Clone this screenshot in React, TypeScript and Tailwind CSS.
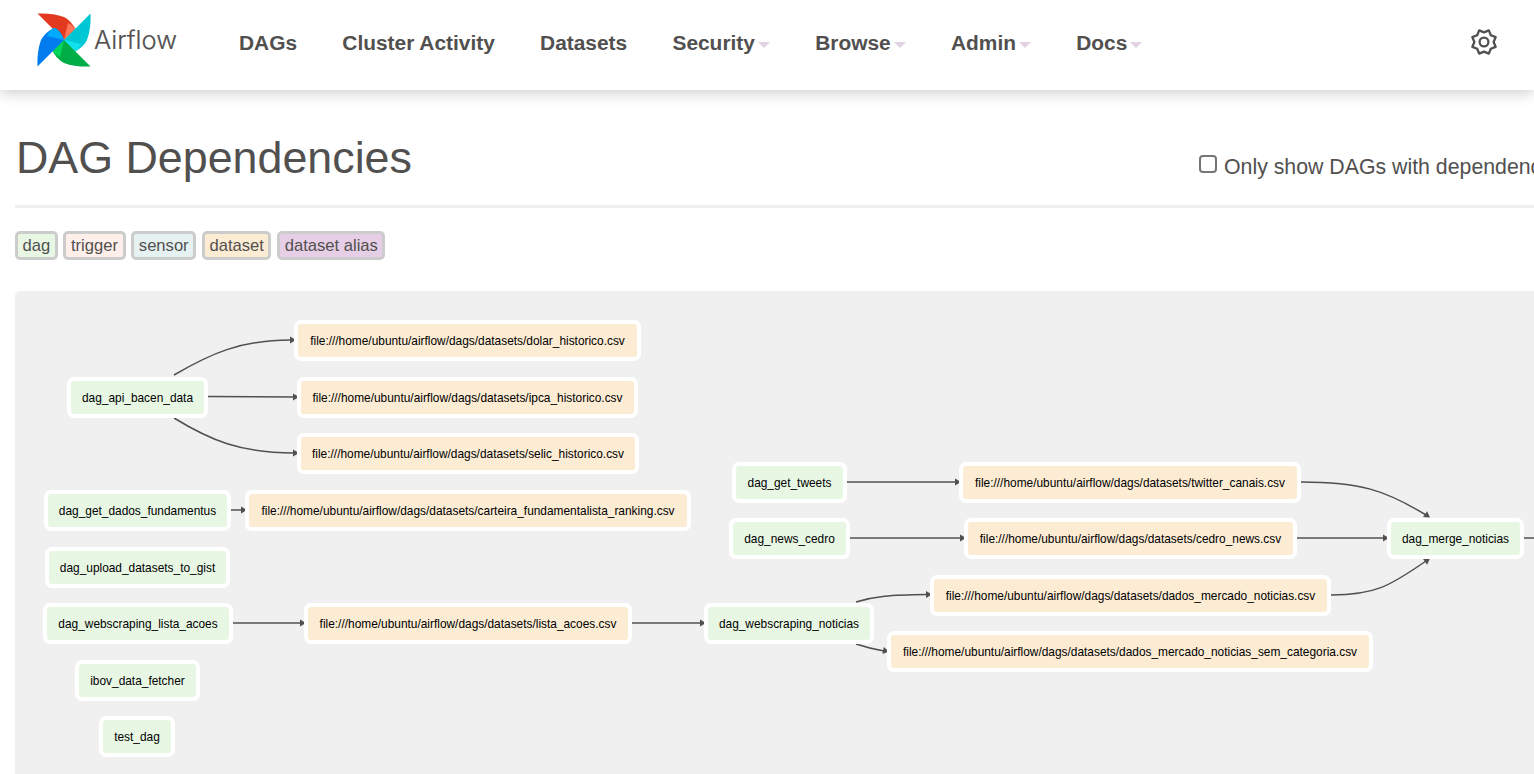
import React from "react";

type N = { t: string; x0: number; x1: number; cy: number; k: "dag" | "ds" };
const nodes: N[] = [
  { t: "file:///home/ubuntu/airflow/dags/datasets/dolar_historico.csv", x0: 295, x1: 640, cy: 340, k: "ds" },
  { t: "file:///home/ubuntu/airflow/dags/datasets/ipca_historico.csv", x0: 298, x1: 637, cy: 397, k: "ds" },
  { t: "file:///home/ubuntu/airflow/dags/datasets/selic_historico.csv", x0: 298, x1: 638, cy: 453, k: "ds" },
  { t: "dag_api_bacen_data", x0: 68, x1: 207, cy: 397, k: "dag" },
  { t: "dag_get_dados_fundamentus", x0: 45, x1: 230, cy: 510, k: "dag" },
  { t: "file:///home/ubuntu/airflow/dags/datasets/carteira_fundamentalista_ranking.csv", x0: 246, x1: 690, cy: 510, k: "ds" },
  { t: "dag_upload_datasets_to_gist", x0: 46, x1: 229, cy: 567, k: "dag" },
  { t: "dag_webscraping_lista_acoes", x0: 44, x1: 232, cy: 623, k: "dag" },
  { t: "file:///home/ubuntu/airflow/dags/datasets/lista_acoes.csv", x0: 305, x1: 631, cy: 623, k: "ds" },
  { t: "dag_webscraping_noticias", x0: 705, x1: 873, cy: 623, k: "dag" },
  { t: "ibov_data_fetcher", x0: 76, x1: 199, cy: 680, k: "dag" },
  { t: "test_dag", x0: 100, x1: 174, cy: 736, k: "dag" },
  { t: "dag_get_tweets", x0: 733, x1: 846, cy: 482, k: "dag" },
  { t: "file:///home/ubuntu/airflow/dags/datasets/twitter_canais.csv", x0: 960, x1: 1300, cy: 482, k: "ds" },
  { t: "dag_news_cedro", x0: 730, x1: 849, cy: 538, k: "dag" },
  { t: "file:///home/ubuntu/airflow/dags/datasets/cedro_news.csv", x0: 965, x1: 1296, cy: 538, k: "ds" },
  { t: "dag_merge_noticias", x0: 1388, x1: 1523, cy: 538, k: "dag" },
  { t: "file:///home/ubuntu/airflow/dags/datasets/dados_mercado_noticias.csv", x0: 931, x1: 1330, cy: 595, k: "ds" },
  { t: "file:///home/ubuntu/airflow/dags/datasets/dados_mercado_noticias_sem_categoria.csv", x0: 888, x1: 1372, cy: 651, k: "ds" },
];

const CANVAS_X = 15;
const CANVAS_Y = 291;

const edges: { d: string; a: [number, number, number] }[] = [
  { d: "M174 375 C210 354 240 340 291 340", a: [296, 340, 0] },
  { d: "M207 396.500 L294 397", a: [299, 397, 0] },
  { d: "M174 418 C210 440 240 453 294 453", a: [299, 453, 0] },
  { d: "M230 510 L242 510", a: [247, 510, 0] },
  { d: "M232 623 L301 623", a: [306, 623, 0] },
  { d: "M631 623 L701 623", a: [706, 623, 0] },
  { d: "M856 602 C875 596 890 595 927 594.500", a: [932, 594.500, 0] },
  { d: "M856 644 C865 647 872 649 884 651", a: [889, 651.500, 10] },
  { d: "M846 482 L956 482", a: [961, 482, 0] },
  { d: "M849 538 L961 538", a: [966, 538, 0] },
  { d: "M1301 482 C1360 482 1385 490 1426 515", a: [1430, 517.500, 35] },
  { d: "M1296 538 L1384 538", a: [1389, 538, 0] },
  { d: "M1331 595 C1375 595 1390 586 1426 561", a: [1430, 558.500, -35] },
  { d: "M1523 538 L1534 538", a: [1540, 538, 0] },
];

function Logo() {
  const blade = (main: string, light: string, rot: number) => (
    <g transform={`rotate(${rot})`} key={rot}>
      <path d="M0 0 L-26.500 -26.500 C-18 -27 -8 -26 0 -23 C6 -20 10 -14 12 -10 C12 -6 6 -2 0 0 Z" fill={main} />
      <path d="M0 0 L4 -17 C8 -15 10.500 -13 12 -10 C11 -6 6 -2 0 0 Z" fill={light} />
    </g>
  );
  return (
    <svg width="56" height="56" viewBox="-28 -28 56 56" className="shrink-0">
      {blade("#e43921", "#ff7557", 0)}
      {blade("#00c7d4", "#11e1ee", 90)}
      {blade("#00ad46", "#04d659", 180)}
      {blade("#017cee", "#00acff", 270)}
    </svg>
  );
}

function gearPath() {
  const pts: string[] = [];
  for (let k = 0; k < 16; k++) {
    const r = k % 2 === 0 ? 12.6 : 9.6;
    const ang = ((k * 22.5 + 22.5) * Math.PI) / 180;
    pts.push(`${(14 + r * Math.sin(ang)).toFixed(2)} ${(14 - r * Math.cos(ang)).toFixed(2)}`);
  }
  return `M${pts.join(" L")} Z`;
}

function Caret() {
  return <span className="mt-[5px] ml-[3px] h-0 w-0 border-x-[6px] border-t-[6px] border-x-transparent border-t-[#e2d2e2]" />;
}

function NavItem({ label, caret }: { label: string; caret?: boolean }) {
  return (
    <a className="flex items-center text-[20.900px] font-bold whitespace-nowrap text-[#51504f]">
      {label}
      {caret && <Caret />}
    </a>
  );
}

function Badge({ label, bg }: { label: string; bg: string }) {
  return <span className={`rounded-[5px] border-[3px] border-[#cccccc] px-[4.500px] text-[16.600px] leading-[23px] text-[#51504f] ${bg}`}>{label}</span>;
}

export default function App() {
  return (
    <div className="h-[774px] w-[1534px] overflow-hidden bg-white font-['Liberation_Sans',Arial,sans-serif] text-[#51504f]">
      <header className="flex h-[90px] items-center bg-white px-[36px] shadow-[0_2px_14px_rgba(0,0,0,0.22)]">
        <div className="mb-[10px] flex items-center">
          <Logo />
          <span className="ml-[2px] font-['Inter',sans-serif] text-[25.500px] leading-[28px] font-light text-[#51504f] [-webkit-text-stroke:0.2px_#51504f]">Airflow</span>
        </div>
        <nav className="mb-[4px] ml-[62px] flex items-center gap-[45.300px]">
          <NavItem label="DAGs" />
          <NavItem label="Cluster Activity" />
          <NavItem label="Datasets" />
          <NavItem label="Security" caret />
          <NavItem label="Browse" caret />
          <NavItem label="Admin" caret />
          <NavItem label="Docs" caret />
        </nav>
        <svg className="mb-[6px] ml-auto" width="28" height="28" viewBox="0 0 28 28" fill="none" stroke="#51504f" strokeWidth="2.300" strokeLinejoin="round">
          <path d={gearPath()} />
          <circle cx="14" cy="14" r="4.400" />
        </svg>
      </header>

      <main className="w-[1800px] pl-[15px]">
        <div className="flex h-[118px] items-start border-b-[3px] border-[#eeeeee] pt-[40px]">
          <h1 className="w-[1184px] pl-px text-[44.800px] leading-[55px] font-normal whitespace-nowrap text-[#51504f]">DAG Dependencies</h1>
          <label className="mt-[23px] flex items-start text-[21.300px] leading-[29px] whitespace-nowrap text-[#51504f]">
            <span className="mt-[2px] mr-[7px] h-[18px] w-[18px] rounded-[4px] border-2 border-[#767676] bg-white" />
            Only show DAGs with dependencies
          </label>
        </div>
        <div className="mt-[23px] flex gap-[5.800px]">
          <Badge label="dag" bg="bg-[#e8f7e4]" />
          <Badge label="trigger" bg="bg-[#ffefeb]" />
          <Badge label="sensor" bg="bg-[#e6f1f2]" />
          <Badge label="dataset" bg="bg-[#fcecd4]" />
          <Badge label="dataset alias" bg="bg-[#e6cfe6]" />
        </div>
        <div className="relative mt-[31px] h-[600px] rounded-[5px] bg-[#f0f0f0]">
          <svg className="absolute top-0 left-0" width="1519" height="483" viewBox={`${CANVAS_X} ${CANVAS_Y} 1519 483`} fill="none">
            {edges.map((e, i) => (
              <g key={i}>
                <path d={e.d} stroke="#51504f" strokeWidth="1.500" />
                <path d="M-6 -3.500 L0 0 L-6 3.500 Z" fill="#51504f" transform={`translate(${e.a[0]} ${e.a[1]}) rotate(${e.a[2]})`} />
              </g>
            ))}
          </svg>
          {nodes.map((n) => (
            <div
              key={n.t}
              className={`absolute flex h-[41px] items-center justify-center rounded-[7px] border-4 border-white pt-[3px] text-[11.900px] whitespace-nowrap text-black ${n.k === "dag" ? "bg-[#e8f7e4]" : "bg-[#fcecd4]"}`}
              style={{ left: n.x0 - 1 - CANVAS_X, width: n.x1 - n.x0 + 2, top: n.cy - 20.5 - CANVAS_Y }}
            >
              {n.t}
            </div>
          ))}
        </div>
      </main>
    </div>
  );
}
